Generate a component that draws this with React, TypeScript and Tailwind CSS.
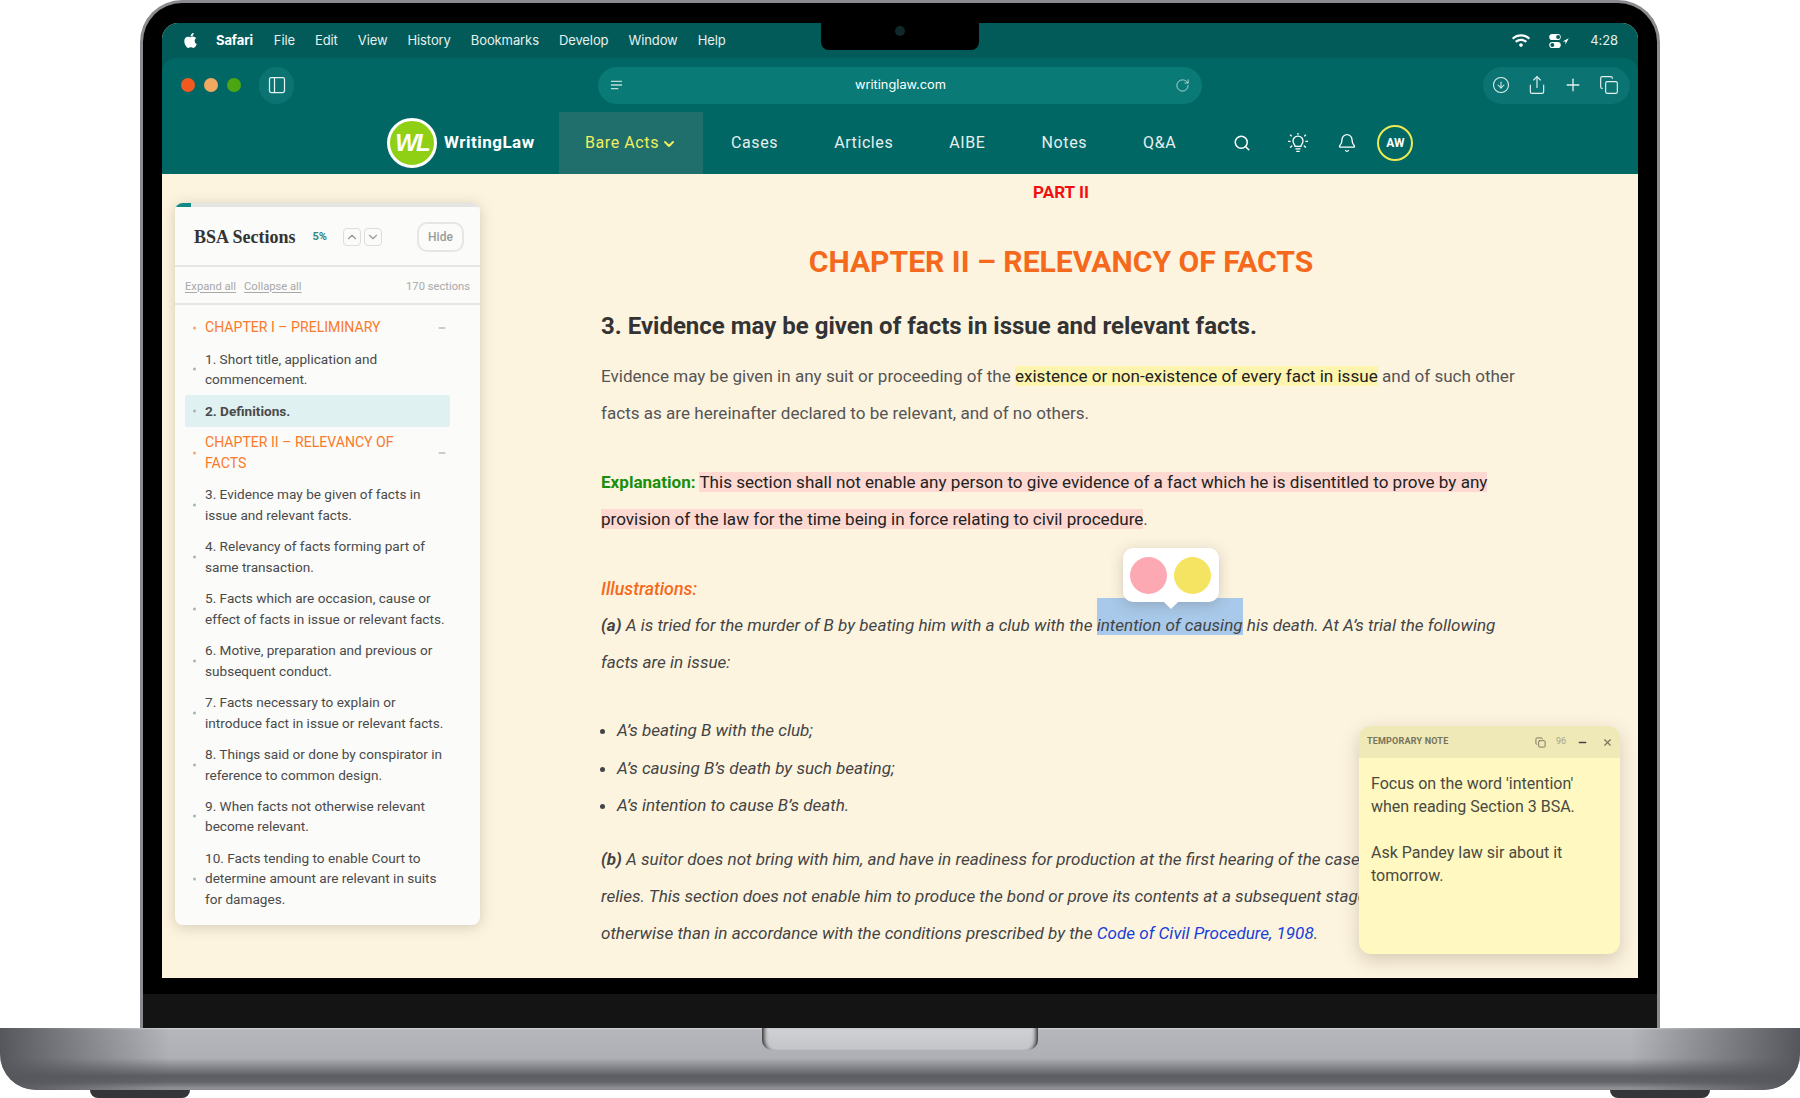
import {
  Bell,
  ChevronDown,
  ChevronUp,
  CircleArrowDown,
  Copy,
  Minus,
  PanelLeft,
  Plus,
  RotateCw,
  Search,
  Share,
  X,
} from 'lucide-react'
import { FaApple, FaWifi } from 'react-icons/fa'

const MENU_ITEMS = ['File', 'Edit', 'View', 'History', 'Bookmarks', 'Develop', 'Window', 'Help']
const NAV_ITEMS = ['Cases', 'Articles', 'AIBE', 'Notes', 'Q&A']

type TocItem = { label: string; kind: 'chapter' | 'section' | 'active' }

const TOC: TocItem[] = [
  { label: 'CHAPTER I – PRELIMINARY', kind: 'chapter' },
  { label: '1. Short title, application and commencement.', kind: 'section' },
  { label: '2. Definitions.', kind: 'active' },
  { label: 'CHAPTER II – RELEVANCY OF FACTS', kind: 'chapter' },
  { label: '3. Evidence may be given of facts in issue and relevant facts.', kind: 'section' },
  { label: '4. Relevancy of facts forming part of same transaction.', kind: 'section' },
  { label: '5. Facts which are occasion, cause or effect of facts in issue or relevant facts.', kind: 'section' },
  { label: '6. Motive, preparation and previous or subsequent conduct.', kind: 'section' },
  { label: '7. Facts necessary to explain or introduce fact in issue or relevant facts.', kind: 'section' },
  { label: '8. Things said or done by conspirator in reference to common design.', kind: 'section' },
  { label: '9. When facts not otherwise relevant become relevant.', kind: 'section' },
  { label: '10. Facts tending to enable Court to determine amount are relevant in suits for damages.', kind: 'section' },
]

function MenuBar() {
  return (
    <div className="flex h-[35px] items-center justify-between pl-[20px] pr-[20px] font-['Inter',sans-serif] text-[13px] tracking-[-0.1px] text-[#e6f0ef]">
      <div className="flex items-center">
        <FaApple className="h-[17px] w-[17px] text-white" />
        <span className="ml-[17px] font-bold text-white">Safari</span>
        <div className="ml-[21px] flex items-center gap-[20px]">
          {MENU_ITEMS.map((item) => (
            <span key={item}>{item}</span>
          ))}
        </div>
      </div>
      <div className="flex items-center">
        <FaWifi className="h-[15px] w-[18px] text-white" />
        <svg viewBox="0 0 24 18" className="ml-[18px] h-[16px] w-[22px]" fill="none">
          <rect x="1" y="1" width="13" height="7" rx="3.5" fill="#fff" />
          <rect x="1" y="10" width="13" height="7" rx="3.5" fill="#fff" />
          <circle cx="11" cy="4.5" r="2.2" fill="#025b59" />
          <circle cx="4.5" cy="13.5" r="2.2" fill="#025b59" />
          <path d="M23 6l-7 3.5h3.2V13z" fill="#fff" />
        </svg>
        <span className="ml-[20px]">4:28</span>
      </div>
    </div>
  )
}

function Toolbar() {
  return (
    <div className="relative flex h-[54px] items-center rounded-t-[14px] bg-[#016765] pl-[19px] pr-[8px]">
      <div className="flex items-center gap-[9px]">
        <span className="h-[14px] w-[14px] rounded-full bg-[#f2591f]" />
        <span className="h-[14px] w-[14px] rounded-full bg-[#f0a862]" />
        <span className="h-[14px] w-[14px] rounded-full bg-[#4ca512]" />
      </div>
      <div className="ml-[18px] flex h-[37px] w-[35px] items-center justify-center rounded-full bg-[#0b7371]">
        <PanelLeft className="h-[20px] w-[20px] text-[#e6f2f1]" strokeWidth={1.5} />
      </div>
      <div className="ml-[304px] flex h-[37px] w-[604px] items-center justify-between rounded-full bg-[#097a76] px-[12px] font-['Inter',sans-serif] text-[12.8px] text-white">
        <svg viewBox="0 0 14 12" className="h-[12px] w-[13px]" fill="none" stroke="#bcdad8" strokeWidth="1.4">
          <path d="M1 2h12M1 6h12M1 10h8" />
        </svg>
        <span className="ml-[3px]">writinglaw.com</span>
        <RotateCw className="h-[15px] w-[15px] text-[#bcdad8]" strokeWidth={1.5} />
      </div>
      <div className="ml-auto flex h-[37px] w-[147px] items-center rounded-full bg-[#0b7371] text-[#e3f0ef]">
        <span className="flex w-[36px] justify-center">
          <CircleArrowDown className="h-[18px] w-[18px]" strokeWidth={1.4} />
        </span>
        <span className="flex w-[36px] justify-center">
          <Share className="h-[20px] w-[20px]" strokeWidth={1.4} />
        </span>
        <span className="flex w-[36px] justify-center">
          <Plus className="h-[20px] w-[20px]" strokeWidth={1.6} />
        </span>
        <span className="flex w-[36px] justify-center">
          <Copy className="h-[20px] w-[20px]" strokeWidth={1.4} />
        </span>
      </div>
    </div>
  )
}

function SiteNav() {
  return (
    <nav className="flex h-[62px] shrink-0 items-center bg-[#016765] pl-[225px] font-['Roboto',sans-serif] text-[16px] tracking-[0.6px] text-[#e4efee]">
      <div className="flex h-[50px] w-[50px] items-center justify-center rounded-full border-[3px] border-white bg-[#8fd014] font-['Liberation_Sans',sans-serif] text-[24px] font-bold italic tracking-[-2px] text-white">
        WL
      </div>
      <span className="ml-[7px] w-[115px] text-[17px] font-bold tracking-[0.5px] text-white">WritingLaw</span>
      <div className="flex h-full w-[144px] items-center justify-center bg-[#206f6d] text-[#f2ee5e]">
        Bare Acts
        <ChevronDown className="ml-[2px] mt-[2px] h-[16px] w-[16px]" strokeWidth={3} />
      </div>
      <div className="ml-[28px] flex items-center">
        {NAV_ITEMS.map((item, i) => (
          <span key={item} className={i === 0 ? '' : 'ml-[56px]'}>
            {item}
          </span>
        ))}
      </div>
      <div className="ml-[57px] flex items-center text-white">
        <Search className="h-[18px] w-[18px]" strokeWidth={2} />
        <svg
          viewBox="0 0 24 24"
          className="ml-[37px] h-[20px] w-[20px]"
          fill="none"
          stroke="currentColor"
          strokeWidth="1.6"
          strokeLinecap="round"
        >
          <path d="M8.5 16c0-2-2.5-3.2-2.5-6.3a6 6 0 0 1 12 0c0 3.100-2.500 4.300-2.500 6.300z" />
          <path d="M9.500 19h5M10.500 22h3M12 0.500v1M3 2.500l1 1M21 2.500l-1 1M0.500 10h2M21.500 10h2M3 17l1.500-1.500M21 17l-1.500-1.500" />
        </svg>
        <Bell className="ml-[29px] h-[20px] w-[20px]" strokeWidth={1.6} />
        <div className="ml-[20px] flex h-[36px] w-[36px] items-center justify-center rounded-full border-2 border-[#ecea52] text-[12px] font-bold tracking-normal">
          AW
        </div>
      </div>
    </nav>
  )
}

function Sidebar() {
  return (
    <aside className="ml-[13px] mt-[29px] h-[722px] w-[305px] shrink-0 overflow-hidden rounded-[8px] bg-[#fbfbf9] font-['Roboto',sans-serif] shadow-[0_2px_14px_rgba(90,80,50,0.25)]">
      <div className="h-[4px] bg-[#e4e4e2]">
        <div className="h-full w-[16px] bg-[#0f8a84]" />
      </div>
      <div className="flex h-[60px] items-center border-b-2 border-[#e6e6e4] pl-[19px] pr-[16px] pt-[2px]">
        <span className="font-['Liberation_Serif',serif] text-[18px] font-bold text-[#333]">BSA Sections</span>
        <span className="ml-[17px] text-[11px] font-bold text-[#2f8583]">5%</span>
        <div className="ml-[16px] flex gap-[3px] text-[#9a9a98]">
          <span className="flex h-[18px] w-[18px] items-center justify-center rounded-[4px] border border-[#ddd]">
            <ChevronUp className="h-[14px] w-[14px]" />
          </span>
          <span className="flex h-[18px] w-[18px] items-center justify-center rounded-[4px] border border-[#ddd]">
            <ChevronDown className="h-[14px] w-[14px]" />
          </span>
        </div>
        <span className="ml-auto flex h-[30px] w-[47px] items-center justify-center rounded-[10px] border-2 border-[#e6e6e4] text-[12px] font-medium text-[#9b9b9b]">
          Hide
        </span>
      </div>
      <div className="flex h-[38px] items-center border-b-2 border-[#e6e6e4] px-[10px] pt-[4px] text-[11.2px] text-[#a9a9a9]">
        <span className="underline underline-offset-2">Expand all</span>
        <span className="ml-[8px] underline underline-offset-2">Collapse all</span>
        <span className="ml-auto">170 sections</span>
      </div>
      <ul className="ml-[10px] mt-[7px] w-[265px] text-[13.6px] leading-[20.6px] text-[#4a4a4a]">
        {TOC.map((item) => (
          <li
            key={item.label}
            className={
              item.kind === 'active'
                ? 'relative rounded-[2px] bg-[#e0f1f1] py-[5.4px] pl-[20px] font-bold'
                : item.kind === 'chapter'
                  ? 'relative py-[5.4px] pl-[20px] pr-[24px] text-[14.1px] text-[#f97a2b]'
                  : 'relative py-[5.4px] pl-[20px] pr-[4px]'
            }
          >
            <span
              className={
                item.kind === 'chapter'
                  ? 'absolute left-[8px] top-1/2 h-[3px] w-[3px] -translate-y-1/2 rounded-full bg-[#f9a27a]'
                  : 'absolute left-[8px] top-1/2 h-[3px] w-[3px] -translate-y-1/2 rounded-full bg-[#a9b4b4]'
              }
            />
            {item.label}
            {item.kind === 'chapter' && (
              <Minus className="absolute right-[3px] top-1/2 h-[10px] w-[10px] -translate-y-1/2 text-[#888]" strokeWidth={2} />
            )}
          </li>
        ))}
      </ul>
    </aside>
  )
}

function Article() {
  return (
    <article className="ml-[121px] w-[920px] shrink-0 font-['Roboto',sans-serif] text-[17.07px] leading-[37.2px] text-[#555]">
      <p className="mt-[5px] text-center font-bold leading-[27px] text-[#f01010]">PART II</p>
      <h2 className="mt-[34px] text-center text-[30.1px] font-bold leading-[44px] text-[#f4691b]">
        CHAPTER II – RELEVANCY OF FACTS
      </h2>
      <h3 className="mt-[22px] text-[24px] font-bold leading-[40px] text-[#333]">
        3. Evidence may be given of facts in issue and relevant facts.
      </h3>
      <p className="mt-[12px]">
        Evidence may be given in any suit or proceeding of the{' '}
        <span className="bg-[#fdf4ae] text-[#222]">existence or non-existence of every fact in issue</span> and of such
        other facts as are hereinafter declared to be relevant, and of no others.
      </p>
      <p className="mt-[31.5px]">
        <b className="font-bold text-[#1a8f0c]">Explanation:</b>{' '}
        <span className="bg-[#fdd9d2] text-[#222]">
          This section shall not enable any person to give evidence of a fact which he is disentitled to prove by any
          provision of the law for the time being in force relating to civil procedure
        </span>
        .
      </p>
      <p className="mt-[31.5px] text-[17.8px] font-medium italic text-[#f4691b]">Illustrations:</p>
      <p className="italic text-[#444]">
        <b className="font-bold">(a)</b> A is tried for the murder of B by beating him with a club with the{' '}
        <span className="relative -mt-[12px] inline-block bg-[#a9c9ea] pt-[17px] leading-[20px]">
          intention of causing
          <span className="absolute bottom-[33px] left-[26px] flex h-[54px] w-[96px] items-center justify-center gap-[7px] rounded-[10px] bg-white shadow-[0_3px_14px_rgba(70,70,60,0.25)]">
            <span className="h-[37px] w-[37px] rounded-full bg-[#fda9b3]" />
            <span className="h-[37px] w-[37px] rounded-full bg-[#f5e462]" />
            <span className="absolute -bottom-[5px] left-[43px] h-[10px] w-[10px] rotate-45 bg-white" />
          </span>
        </span>{' '}
        his death. At A’s trial the following facts are in issue:
      </p>
      <ul className="mt-[31px] list-disc pl-[16px] italic text-[#444]">
        <li>A’s beating B with the club;</li>
        <li>A’s causing B’s death by such beating;</li>
        <li>A’s intention to cause B’s death.</li>
      </ul>
      <p className="mt-[17px] italic text-[#444]">
        <b className="font-bold">(b)</b> A suitor does not bring with him, and have in readiness for production at the
        first hearing of the case, a bond on which he relies. This section does not enable him to produce the bond or
        prove its contents at a subsequent stage of the proceedings, otherwise than in accordance with the conditions
        prescribed by the <span className="text-[#1740d8]">Code of Civil Procedure, 1908</span>.
      </p>
    </article>
  )
}

function StickyNote() {
  return (
    <div className="absolute bottom-[24px] right-[18px] h-[228px] w-[261px] overflow-hidden rounded-[12px] bg-[#fff8c0] font-['Roboto',sans-serif] shadow-[0_6px_18px_rgba(90,80,50,0.25)]">
      <div className="flex h-[32px] items-center bg-[#efe9b8] pl-[8px] pr-[7px] text-[#77735a]">
        <span className="text-[9px] font-bold tracking-[0.2px]">TEMPORARY NOTE</span>
        <Copy className="ml-auto h-[11px] w-[11px]" strokeWidth={2} />
        <span className="ml-[10px] text-[9px] text-[#a7a38a]">96</span>
        <Minus className="ml-[11px] h-[11px] w-[11px] text-[#444]" strokeWidth={3} />
        <X className="ml-[14px] h-[11px] w-[11px]" strokeWidth={2.4} />
      </div>
      <p className="px-[12px] pt-[14px] text-[16px] leading-[23px] text-[#4a4a40]">
        Focus on the word 'intention' when reading Section 3 BSA.
        <br />
        <br />
        Ask Pandey law sir about it tomorrow.
      </p>
    </div>
  )
}

function Screen() {
  return (
    <div className="relative flex h-[955px] flex-col overflow-hidden rounded-t-[16px] bg-[#fdf4e0]">
      <div className="shrink-0 bg-[#025b59]">
        <MenuBar />
        <Toolbar />
      </div>
      <SiteNav />
      <div className="relative flex flex-1 overflow-hidden">
        <Sidebar />
        <Article />
        <StickyNote />
      </div>
    </div>
  )
}

export default function App() {
  return (
    <div className="flex h-[1098px] w-[1800px] flex-col overflow-hidden bg-white">
      <div className="relative mx-auto h-[1028px] w-[1520px] rounded-t-[42px] border-[3px] border-b-0 border-[#8b8b8f] bg-black px-[19px] pt-[20px]">
        <Screen />
        <div className="absolute left-[678px] top-0 flex h-[47px] w-[158px] items-start justify-center rounded-b-[8px] bg-black pt-[23px]">
          <span className="h-[10px] w-[10px] rounded-full bg-[#10282a]" />
        </div>
        <div className="mx-[-19px] mt-[16px] h-[35px] bg-[#141414]" />
      </div>
      <div className="relative h-[62px] shrink-0 overflow-hidden rounded-b-[36px] bg-[linear-gradient(to_bottom,#d7d8dc_0px,#b4b6bb_2px,#aeb0b6_30px,#5b5d62_48px,#62646a_54px,#8d8f93_60px)]">
        <div className="absolute inset-0 bg-[linear-gradient(to_right,#55575c_0px,rgba(90,92,96,0)_170px,rgba(90,92,96,0)_1630px,#55575c_1800px)]" />
        <div className="relative mx-auto h-[22px] w-[276px] rounded-b-[10px] bg-[linear-gradient(to_bottom,#cfd1d5,#c3c5ca)] shadow-[inset_6px_0_4px_-4px_#222,inset_-6px_0_4px_-4px_#222]" />
      </div>
      <div className="flex h-[8px] justify-between px-[90px]">
        <div className="h-full w-[100px] rounded-b-[8px] bg-[#333538]" />
        <div className="h-full w-[100px] rounded-b-[8px] bg-[#333538]" />
      </div>
    </div>
  )
}
